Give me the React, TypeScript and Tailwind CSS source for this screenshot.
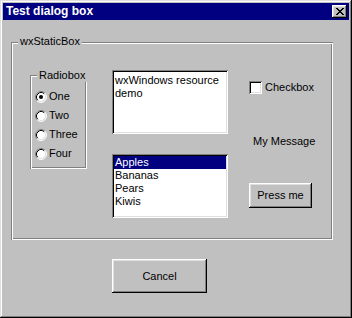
import React from "react";

const raised = "shadow-[inset_-1px_-1px_#000,inset_1px_1px_#fff,inset_-2px_-2px_#808080,inset_2px_2px_#dfdfdf]";
const sunken = "shadow-[inset_1px_1px_#808080,inset_-1px_-1px_#fff,inset_2px_2px_#000,inset_-2px_-2px_#dfdfdf]";
const groove = "shadow-[inset_1px_1px_#808080,inset_-1px_-1px_#fff,inset_2px_2px_#fff,inset_-2px_-2px_#808080]";

function Radio({ label, checked }: { label: string; checked?: boolean }) {
  return (
    <div className="flex h-[19px] items-center gap-[2px]">
      <svg width="12" height="12" viewBox="0 0 12 12" className="shrink-0">
        <circle cx="6" cy="6" r="5" fill="#fff" />
        <path d="M2.11 9.89 A5.5 5.5 0 0 1 9.89 2.11" fill="none" stroke="#808080" />
        <path d="M2.82 9.18 A4.5 4.5 0 0 1 9.18 2.82" fill="none" stroke="#000" />
        <path d="M9.89 2.11 A5.5 5.5 0 0 1 2.11 9.89" fill="none" stroke="#fff" />
        <path d="M9.18 2.82 A4.5 4.5 0 0 1 2.82 9.18" fill="none" stroke="#dfdfdf" />
        {checked && <circle cx="6" cy="6" r="2" fill="#000" />}
      </svg>
      <span>{label}</span>
    </div>
  );
}

export default function App() {
  const fruits = ["Apples", "Bananas", "Pears", "Kiwis"];

  return (
    <div
      className={`flex h-[318px] w-[352px] flex-col bg-[#c0c0c0] p-[3px] text-[11px] leading-[13px] text-black shadow-[inset_-1px_-1px_#000,inset_1px_1px_#dfdfdf,inset_-2px_-2px_#808080,inset_2px_2px_#fff]`}
      style={{ fontFamily: '"Liberation Sans", Arial, sans-serif' }}
    >
      {/* title bar */}
      <div className="flex h-[17px] shrink-0 items-center justify-between bg-[#000080] pl-[3px] pr-[2px]">
        <span className="text-[12px] font-bold text-white">Test dialog box</span>
        <div className={`flex h-[13px] w-[15px] items-center justify-center bg-[#c0c0c0] ${raised}`}>
          <svg width="8" height="7" viewBox="0 0 8 7" className="mb-[1px]">
            <path
              fill="#000"
              d="M0 0h2v1h-2z M6 0h2v1h-2z M1 1h2v1h-2z M5 1h2v1h-2z M2 2h4v1h-4z M3 3h2v1h-2z M2 4h4v1h-4z M1 5h2v1h-2z M5 5h2v1h-2z M0 6h2v1h-2z M6 6h2v1h-2z"
            />
          </svg>
        </div>
      </div>

      {/* static box */}
      <div className={`relative ml-[8px] mt-[22px] flex h-[198px] w-[322px] items-start pl-[19px] ${groove}`}>
        <span className="absolute left-[7px] top-[-7px] bg-[#c0c0c0] px-[2px]">wxStaticBox</span>

        {/* radiobox */}
        <div className={`relative mt-[33px] h-[94px] w-[57px] pl-[5px] pt-[12px] ${groove}`}>
          <span className="absolute left-[7px] top-[-6px] bg-[#c0c0c0] px-[2px]">Radiobox</span>
          <Radio label="One" checked />
          <Radio label="Two" />
          <Radio label="Three" />
          <Radio label="Four" />
        </div>

        {/* text + list */}
        <div className="ml-[25px] mt-[28px] flex w-[116px] flex-col">
          <div className={`h-[64px] bg-white pl-[3px] pr-[2px] pt-[4px] ${sunken}`}>
            wxWindows resource
            <br />
            demo
          </div>
          <div className={`mt-[20px] h-[64px] bg-white p-[2px] ${sunken}`}>
            {fruits.map((f, i) => (
              <div
                key={f}
                className={`h-[13px] pl-[1px] ${i === 0 ? "bg-[#000080] text-white" : ""}`}
              >
                {f}
              </div>
            ))}
          </div>
        </div>

        {/* right column */}
        <div className="ml-[21px] mt-[39px] flex flex-col items-start">
          <div className="flex h-[13px] items-center gap-[3px]">
            <div className={`h-[13px] w-[13px] bg-white ${sunken}`} />
            <span>Checkbox</span>
          </div>
          <span className="ml-[4px] mt-[41px]">My Message</span>
          <button className={`mt-[35px] flex h-[25px] w-[63px] items-center justify-center bg-[#c0c0c0] ${raised}`}>
            Press me
          </button>
        </div>
      </div>

      <button
        className={`ml-[109px] mt-[19px] flex h-[34px] w-[95px] items-center justify-center bg-[#c0c0c0] ${raised}`}
      >
        Cancel
      </button>
    </div>
  );
}
